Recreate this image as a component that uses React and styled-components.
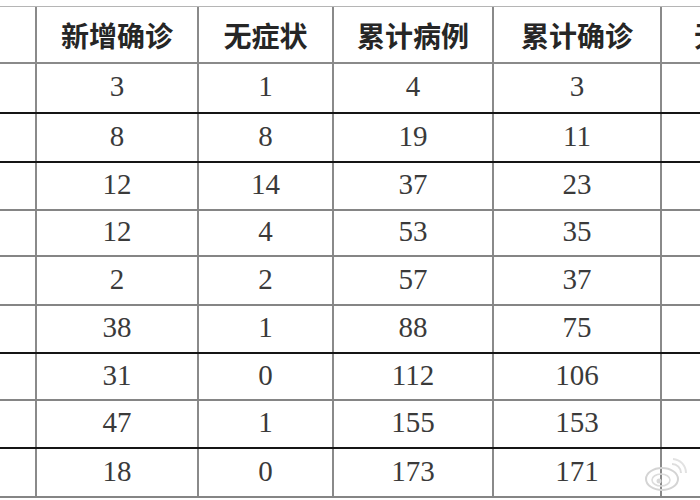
import React from "react";
import styled, { createGlobalStyle } from "styled-components";

const GlobalStyle = createGlobalStyle`
  html, body {
    margin: 0;
    padding: 0;
    background: #fff;
    overflow: hidden;
  }
`;

const headers = ["", "新增确诊", "无症状", "累计病例", "累计确诊", "无症状"];

// 行高取自截图，黑线为粗分隔线
const rows = [
  { v: ["3", "1", "4", "3"], h: 50, dark: true },
  { v: ["8", "8", "19", "11"], h: 49, dark: true },
  { v: ["12", "14", "37", "23"], h: 48 },
  { v: ["12", "4", "53", "35"], h: 46 },
  { v: ["2", "2", "57", "37"], h: 49 },
  { v: ["38", "1", "88", "75"], h: 48, dark: true },
  { v: ["31", "0", "112", "106"], h: 47 },
  { v: ["47", "1", "155", "153"], h: 48, dark: true },
  { v: ["18", "0", "173", "171"], h: 49 },
];

function App() {
  return (
    <Page>
      <GlobalStyle />
      <Table>
        <HeadRow>
          {headers.map((t, i) => (
            <HeadCell key={i}>{t}</HeadCell>
          ))}
        </HeadRow>
        {rows.map((r, i) => (
          <Row key={i} $h={r.h} $dark={r.dark}>
            <Cell />
            {r.v.map((n, j) => (
              <Cell key={j}>{n}</Cell>
            ))}
            <Cell />
          </Row>
        ))}
      </Table>
      <Watermark>
        <svg width="44" height="34" viewBox="0 0 44 34">
          <ellipse cx="18" cy="21" rx="16" ry="11" fill="none" stroke="#d4d4d4" strokeWidth="2" />
          <ellipse cx="17" cy="22" rx="9" ry="6" fill="none" stroke="#dcdcdc" strokeWidth="1.6" />
          <circle cx="15" cy="23" r="2.5" fill="#d8d8d8" />
          <path d="M28 6 a9 9 0 0 1 9 9" fill="none" stroke="#dedede" strokeWidth="2" />
          <path d="M29 1 a14 14 0 0 1 13 14" fill="none" stroke="#e2e2e2" strokeWidth="2" />
        </svg>
      </Watermark>
    </Page>
  );
}

export default App;

const Page = styled.div`
  position: relative;
  width: 700px;
  height: 500px;
  padding-top: 6px;
  box-sizing: border-box;
  overflow: hidden;
`;

const cols = "35px 162px 135px 160px 168px 150px";

const Table = styled.div`
  display: flex;
  flex-direction: column;
  width: 810px;
  border-top: 1px solid #b5b5b5;
`;

const HeadRow = styled.div`
  display: grid;
  grid-template-columns: ${cols};
  height: 55px;
  border-bottom: 2px solid #8a8a8a;
`;

const Row = styled.div`
  display: grid;
  grid-template-columns: ${cols};
  height: ${(p) => p.$h - 2}px;
  border-bottom: 2px solid ${(p) => (p.$dark ? "#151515" : "#858585")};
`;

const HeadCell = styled.div`
  display: flex;
  align-items: center;
  justify-content: center;
  border-left: 2px solid #8a8a8a;
  font-family: "Noto Sans CJK SC", sans-serif;
  font-weight: 700;
  font-size: 28px;
  color: #262626;
  white-space: nowrap;
  overflow: hidden;
  &:first-child {
    border-left: none;
  }
`;

const Cell = styled.div`
  display: flex;
  align-items: center;
  justify-content: center;
  padding-bottom: 3px;
  border-left: 2px solid #8a8a8a;
  font-family: "Liberation Serif", serif;
  font-size: 29px;
  color: #3a3a3a;
  &:first-child {
    border-left: none;
  }
`;

const Watermark = styled.div`
  position: absolute;
  left: 644px;
  top: 458px;
  display: flex;
  align-items: center;
`;
